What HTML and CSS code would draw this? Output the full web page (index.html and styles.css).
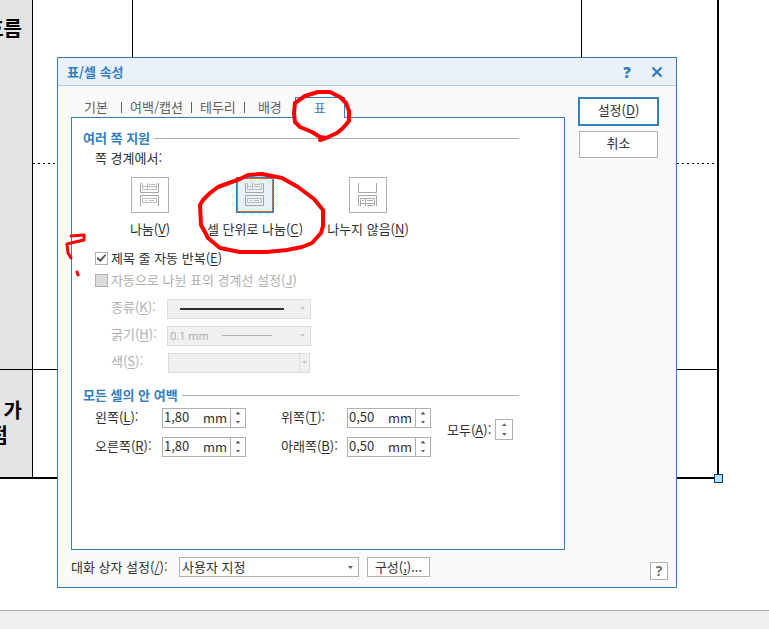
FILE: index.html
```
<!DOCTYPE html>
<html lang="ko">
<head>
    <meta charset="utf-8">
    <title>표/셀 속성</title>
    <link rel="stylesheet" href="styles.css">
</head>
<body>
    <main class="page">
        <div class="sheet">
            <table class="doc">
                <tr class="row1">
                    <th class="rowhead" rowspan="2"><div class="headtext"><span class="line1">흐름</span></div></th>
                    <td class="col2 dashed"></td>
                    <td class="col3 dashed"></td>
                    <td class="col4 dashed"></td>
                </tr>
                <tr class="row2">
                    <td></td>
                    <td></td>
                    <td class="col4"></td>
                </tr>
                <tr class="row3">
                    <th class="rowhead last"><div class="headtext low"><span class="line1">가</span><span class="line2">점</span></div></th>
                    <td></td>
                    <td></td>
                    <td class="col4"></td>
                </tr>
            </table>
            <span class="handle"></span>
        </div>
    </main>
    <div class="statusbar"></div>

    <form class="dialog">
        <div class="titlebar">
            <h1>표/셀 속성</h1>
            <button type="button" class="titlebtn">?</button>
            <button type="button" class="titlebtn" aria-label="닫기">
                <svg width="12" height="12" viewBox="0 0 12 12"><path d="M1.500 1.500L10.500 10.500M10.500 1.500L1.500 10.500" stroke="#357ebd" stroke-width="2.400"/></svg>
            </button>
        </div>

        <div class="body">
            <div class="left">
                <div class="tabs">
                    <button type="button" class="tab">기본</button><span class="sep"></span>
                    <button type="button" class="tab">여백/캡션</button><span class="sep"></span>
                    <button type="button" class="tab">테두리</button><span class="sep"></span>
                    <button type="button" class="tab">배경</button>
                    <button type="button" class="tab active">표</button>
                </div>
                <div class="panel">
                    <h2>여러 쪽 지원</h2>
                    <p class="sub">쪽 경계에서:</p>
                    <div class="options">
                        <label class="option">
                            <span class="pic">
                                <input type="radio" name="split">
                                <svg width="20" height="24" viewBox="0 0 20 24" fill="none" stroke="#a5a5a5">
                                    <path d="M.5 0V9.500H18.500V0M.5 23V12.500H18.500V23"/>
                                    <path d="M2.500 0V6.500H16.500V0M2.500 3.500H16.500M7.500 0V6.500M9 1.500H15M2.500 15.500H16.500V19.500H2.500ZM5 17.500H7M9 17.500H14" stroke="#bbb"/>
                                </svg>
                            </span>
                            <span>나눔(<u>V</u>)</span>
                        </label>
                        <label class="option">
                            <span class="pic">
                                <input type="radio" name="split" checked>
                                <svg width="20" height="24" viewBox="0 0 20 24" fill="none" stroke="#a5a5a5">
                                    <path d="M.5 0V9.500H18.500V0M.5 12.500H18.500V22.500H.5Z"/>
                                    <path d="M2.500 0V6.500H16.500V0M2.500 3.500H7M9 3.500H15M7.500 0V6.500M9 1.500H15M2.500 15.500H16.500V19.500H2.500ZM5 17.500H7M9 17.500H14" stroke="#bbb"/>
                                </svg>
                            </span>
                            <span>셀 단위로 나눔(<u>C</u>)</span>
                        </label>
                        <label class="option">
                            <span class="pic">
                                <input type="radio" name="split">
                                <svg width="20" height="24" viewBox="0 0 20 24" fill="none" stroke="#a5a5a5">
                                    <path d="M.5 0V9.500H18.500V0M.5 23V12.500H18.500V23"/>
                                    <path d="M2.500 23V15.500H16.500V23M2.500 20.500H16.500M7.500 15V23M9 17.500H15M9 22.500H15M4 17.500H6" stroke="#aaa"/>
                                </svg>
                            </span>
                            <span>나누지 않음(<u>N</u>)</span>
                        </label>
                    </div>

                    <label class="check"><input type="checkbox" checked>제목 줄 자동 반복(<u>E</u>)</label>
                    <label class="check off"><input type="checkbox" disabled>자동으로 나뉜 표의 경계선 설정(<u>J</u>)</label>
                    <div class="lines">
                        <label for="kind">종류(<u>K</u>):</label>
                        <select id="kind" class="select kind" disabled><option></option></select>
                        <label for="thick">굵기(<u>H</u>):</label>
                        <select id="thick" class="select thick" disabled><option>0.1 mm</option></select>
                        <label for="color">색(<u>S</u>):</label>
                        <select id="color" class="select color" disabled><option></option></select>
                    </div>

                    <h2 class="second">모든 셀의 안 여백</h2>
                    <div class="margins">
                        <label for="ml">왼쪽(<u>L</u>):</label>
                        <div class="num"><input id="ml" value="1,80"><span class="unit">mm</span><span class="spin"><button type="button" class="up" aria-label="늘리기"></button><button type="button" class="down" aria-label="줄이기"></button></span></div>
                        <label for="mt" class="colb">위쪽(<u>T</u>):</label>
                        <div class="num"><input id="mt" value="0,50"><span class="unit">mm</span><span class="spin"><button type="button" class="up" aria-label="늘리기"></button><button type="button" class="down" aria-label="줄이기"></button></span></div>
                        <div class="all">
                            <span>모두(<u>A</u>):</span>
                            <span class="spin"><button type="button" class="up" aria-label="모두 늘리기"></button><button type="button" class="down" aria-label="모두 줄이기"></button></span>
                        </div>
                        <label for="mr">오른쪽(<u>R</u>):</label>
                        <div class="num"><input id="mr" value="1,80"><span class="unit">mm</span><span class="spin"><button type="button" class="up" aria-label="늘리기"></button><button type="button" class="down" aria-label="줄이기"></button></span></div>
                        <label for="mb" class="colb">아래쪽(<u>B</u>):</label>
                        <div class="num"><input id="mb" value="0,50"><span class="unit">mm</span><span class="spin"><button type="button" class="up" aria-label="늘리기"></button><button type="button" class="down" aria-label="줄이기"></button></span></div>
                    </div>
                </div>
            </div>
            <div class="right">
                <button type="submit" class="btn primary">설정(<u>D</u>)</button>
                <button type="button" class="btn cancel">취소</button>
            </div>
        </div>

        <div class="footer">
            <label for="preset">대화 상자 설정(<u>/</u>):</label>
            <select id="preset" class="select preset"><option>사용자 지정</option></select>
            <button type="button" class="btn config">구성(<u>;</u>)...</button>
            <button type="button" class="btn help">?</button>
        </div>
    </form>

    <!-- pen marks -->
    <svg class="marks" width="769" height="629" viewBox="0 0 769 629" fill="none" stroke="#f00" stroke-width="4" stroke-linecap="round" stroke-linejoin="round">
        <path d="M320 140L326 138L337 133L343 128L349 121V111L346 103L340 97L330 92L318 92L305 96L295 103L294 113L295 122L300 127L312 132L320 137L326 138"/>
        <path d="M206 234L201 225L200 205L203 200L210 193L218 187L229 183L240 179L248 175L262 174L282 178L298 187L314 199L323 210V226L321 233L312 243L302 247L287 250L267 252L240 252L220 248L208 238L206 234"/>
        <path d="M71 236L84 235V240L75 242L67 244L68 253L71 258M77 272L78 275" stroke-width="3"/>
    </svg>
</body>
</html>
```
FILE: styles.css
```
body {
    margin: 0;
    min-height: 100vh;
    display: flex;
    flex-direction: column;
    position: relative;
    background: #fff;
    color: #303030;
    font-family: "Noto Sans CJK KR", sans-serif;
    font-size: 13px;
    line-height: 20px;
}
* {
    box-sizing: border-box;
}
button, input, select {
    font: inherit;
    color: inherit;
    margin: 0;
    padding: 0;
    border-radius: 0;
}
u {
    text-underline-offset: 2px;
}

/* document behind the dialog */
.page {
    flex: 1;
    overflow: hidden;
}
.sheet {
    position: relative;
    width: 719px;
}
.doc {
    width: 100%;
    table-layout: fixed;
    border-spacing: 0;
    border-bottom: 2px solid #000;
    border-right: 2px solid #000;
}
.doc td, .doc th {
    padding: 0;
    border-right: 1px solid #000;
    border-bottom: 1px solid #000;
    vertical-align: top;
}
.doc .rowhead {
    width: 33px;
    background: #e4e4e4;
    color: #000;
}
.doc .col2 {
    width: 100px;
}
.doc .col3 {
    width: 449px;
}
.doc .col4 {
    border-right: 0;
}
.doc .dashed {
    border-bottom: 0;
    background: repeating-linear-gradient(90deg, #000 0 2px, #fff 2px 5px) bottom / 100% 1px no-repeat;
}
.row1 {
    height: 164px;
}
.row2 {
    height: 206px;
}
.row3 {
    height: 107px;
}
.doc .row3 td, .doc .row3 th {
    border-bottom: 0;
}
.headtext {
    display: flex;
    flex-direction: column;
    align-items: flex-end;
    padding-top: 15px;
    font-size: 20px;
    line-height: 25px;
    white-space: nowrap;
}
.headtext.low {
    padding-top: 27px;
}
.line1 {
    padding-right: 10px;
}
.line2 {
    padding-right: 24px;
}
.handle {
    position: absolute;
    right: -4px;
    bottom: -4px;
    width: 9px;
    height: 9px;
    border: 1px solid #004080;
    background: #b8e2fb;
}
.statusbar {
    height: 19px;
    border-top: 1px solid #b0b0b0;
    background: #f0f0f0;
}

/* dialog */
.dialog {
    position: absolute;
    left: 57px;
    top: 57px;
    width: 620px;
    border: 1px solid #357ebd;
    background: #fafafa;
}
.titlebar {
    display: flex;
    align-items: center;
    height: 28px;
    padding: 0 10px 0 9px;
    border-bottom: 1px solid #b0cce0;
    background: #e9f1f9;
    color: #357ebd;
}
h1 {
    flex: 1;
    margin: 0;
    font-size: 13px;
}
.titlebtn {
    display: flex;
    align-items: center;
    justify-content: center;
    width: 18px;
    height: 20px;
    margin-left: 12px;
    border: 0;
    background: none;
    font-family: "Open Sans", sans-serif;
    font-size: 15px;
    font-weight: 800;
}
.body {
    display: flex;
    gap: 13px;
    padding: 11px 17px 0 13px;
}
.left {
    flex: 1;
}
.tabs {
    display: flex;
    align-items: center;
    color: #606060;
}
.tab {
    min-width: 50px;
    height: 20px;
    padding: 0 8px;
    border: 0;
    background: none;
    line-height: 18px;
}
.tab.active {
    position: relative;
    height: 21px;
    margin-bottom: -1px;
    border: 1px solid #357ebd;
    border-bottom: 0;
    background: #fff;
    color: #357ebd;
}
.sep {
    width: 1px;
    height: 11px;
    background: #606060;
}
.panel {
    padding: 12px 45px 88px 11px;
    border: 1px solid #357ebd;
    background: #fff;
}
h2 {
    display: flex;
    align-items: center;
    gap: 4px;
    height: 16px;
    margin: 0;
    color: #357ebd;
    font-size: 13px;
}
h2::after {
    content: "";
    flex: 1;
    height: 1px;
    background: #b0b0b0;
}
h2.second {
    margin-top: 11px;
}
.sub {
    margin: 2px 0 9px 12px;
}
.options {
    display: grid;
    grid-template-columns: 110px 100px 126px;
    margin-left: 12px;
}
.option {
    display: flex;
    flex-direction: column;
    align-items: center;
    gap: 6px;
}
.pic {
    display: grid;
    place-items: center;
}
.pic > * {
    grid-area: 1 / 1;
}
.pic input {
    appearance: none;
    width: 38px;
    height: 36px;
    border: 1px solid #b0b0b0;
    background: #fff;
}
.pic input:checked {
    border: 2px solid #357ebd;
    background: #e9f1f9;
    outline: 1px dotted #f08020;
    outline-offset: -2px;
}
.check {
    display: flex;
    align-items: center;
    height: 22px;
    margin-left: 12px;
}
.options + .check {
    margin-top: 8px;
}
.check input {
    appearance: none;
    display: grid;
    place-items: center;
    width: 13px;
    height: 13px;
    margin-right: 3px;
    border: 1px solid #b0b0b0;
    background: #fff;
}
.check input:checked::before {
    content: "";
    width: 9px;
    height: 8px;
    background: #505050;
    clip-path: polygon(0 35%, 38% 65%, 90% 0, 100% 20%, 40% 100%, 0 65%);
}
.check.off, .lines {
    color: #b0b0b0;
}
.check.off input {
    background: #dcdcdc;
}
.lines {
    display: grid;
    grid-template-columns: 56px 144px;
    grid-auto-rows: 27px;
    align-items: center;
    margin: 4px 0 0 28px;
}
.lines label {
    line-height: 22px;
    padding-bottom: 4px;
}
.select {
    appearance: none;
    height: 20px;
    padding: 0 2px;
    border: 1px solid #b0b0b0;
    background: url('data:image/svg+xml,<svg xmlns="http://www.w3.org/2000/svg" width="5" height="3"><path d="M0 0H5L2.500 3Z" fill="%23606060"/></svg>') no-repeat right 5px center #fff;
    line-height: 18px;
}
.select:disabled {
    border-color: #dcdcdc;
    background-color: #f0f0f0;
    background-image: url('data:image/svg+xml,<svg xmlns="http://www.w3.org/2000/svg" width="5" height="3"><path d="M0 0H5L2.500 3Z" fill="%23c8c8c8"/></svg>');
    opacity: 1;
}
.select.kind {
    background-image: linear-gradient(#303030, #303030), url('data:image/svg+xml,<svg xmlns="http://www.w3.org/2000/svg" width="5" height="3"><path d="M0 0H5L2.500 3Z" fill="%23c8c8c8"/></svg>');
    background-position: 12px center, right 5px center;
    background-size: 104px 2px, 5px 3px;
}
.select.thick {
    background-image: linear-gradient(#b0b0b0, #b0b0b0), url('data:image/svg+xml,<svg xmlns="http://www.w3.org/2000/svg" width="5" height="3"><path d="M0 0H5L2.500 3Z" fill="%23c8c8c8"/></svg>');
    background-position: 54px center, right 5px center;
    background-size: 50px 1px, 5px 3px;
    font-family: "Open Sans", sans-serif;
    font-size: 11px;
    color: #a8a8a8;
}
.select.color {
    background-image: linear-gradient(#dcdcdc, #dcdcdc), url('data:image/svg+xml,<svg xmlns="http://www.w3.org/2000/svg" width="5" height="3"><path d="M0 0H5L2.500 3Z" fill="%23c8c8c8"/></svg>');
    background-position: right 9px center, right 2px center;
    background-size: 1px 100%, 5px 3px;
    margin: 0 1px;
}
.margins {
    display: grid;
    grid-template-columns: 67px 84px 101px 84px auto;
    grid-auto-rows: 29px;
    align-items: center;
    margin-left: 12px;
}
.margins label {
    padding-bottom: 2px;
}
.margins .colb {
    padding-left: 35px;
}
.num {
    display: flex;
    height: 20px;
    border: 1px solid #b0b0b0;
    line-height: 18px;
}
.num input {
    flex: 1;
    min-width: 0;
    padding: 0 0 2px 1px;
    border: 0;
    background: none;
}
.unit {
    padding-right: 3px;
}
.spin {
    display: flex;
    flex-direction: column;
    width: 15px;
    border-left: 1px solid #b0b0b0;
    background: #fff;
}
.spin button {
    flex: 1;
    display: grid;
    place-items: center;
    border: 0;
    background: none;
}
.spin button::before {
    content: "";
    width: 5px;
    height: 3px;
    background: #606060;
    clip-path: polygon(50% 0, 100% 100%, 0 100%);
}
.spin .down::before {
    clip-path: polygon(0 0, 100% 0, 50% 100%);
}
.all {
    grid-area: 1 / 5 / 3 / 6;
    display: flex;
    align-items: center;
    gap: 4px;
    padding: 0 0 5px 16px;
}
.all .spin {
    width: 18px;
    height: 21px;
    border: 1px solid #b0b0b0;
}
.right {
    display: flex;
    flex-direction: column;
    align-items: center;
    gap: 5px;
    width: 81px;
}
.btn {
    border: 1px solid #b0b0b0;
    background: #fff;
    line-height: 18px;
}
.primary {
    width: 100%;
    height: 29px;
    padding-bottom: 3px;
    border: 2px solid #357ebd;
}
.cancel {
    width: 79px;
    height: 27px;
    padding-bottom: 3px;
}
.footer {
    display: flex;
    align-items: flex-start;
    padding: 7px 8px 7px 13px;
}
.footer label {
    width: 108px;
}
.preset {
    width: 180px;
    margin-right: 8px;
}
.config {
    width: 63px;
    height: 20px;
}
.help {
    width: 18px;
    height: 18px;
    margin: 5px 0 0 auto;
    color: #707070;
    font-family: "Open Sans", sans-serif;
    font-size: 14px;
    font-weight: bold;
    line-height: 16px;
}

.marks {
    position: absolute;
    left: 0;
    top: 0;
    pointer-events: none;
}
```
